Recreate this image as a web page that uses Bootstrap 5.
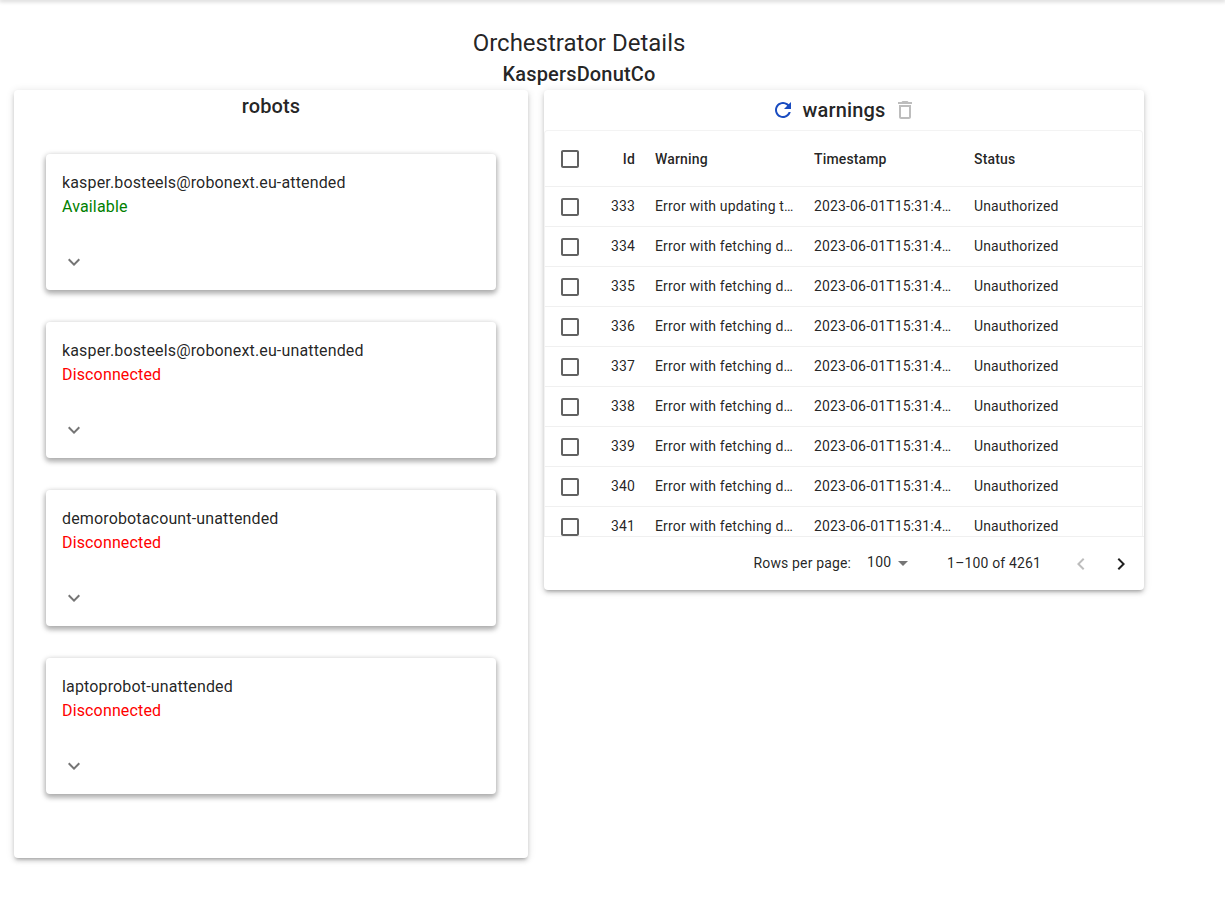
<!DOCTYPE html>
<html lang="en">
  <head>
    <meta charset="UTF-8" />
    <meta name="viewport" content="width=device-width, initial-scale=1.0" />
    <title>Orchestrator Details</title>
    <link
      href="https://cdn.jsdelivr.net/npm/bootstrap@5.3.3/dist/css/bootstrap.min.css"
      rel="stylesheet"
    />
    <style>
      body {
        font-family: Roboto, "Liberation Sans", sans-serif;
        color: rgba(0, 0, 0, 0.87);
        background: #fff;
        margin: 0;
        min-height: 920px;
      }

      .top-edge {
        height: 0;
        box-shadow: 0 0 4px 1px rgba(0, 0, 0, 0.3);
      }

      .page-wrap {
        width: 1130px;
        margin-left: 14px;
      }

      .page-title {
        font-size: 24px;
        font-weight: 400;
        line-height: 32px;
        margin: 0;
        padding-top: 27px;
      }

      .page-subtitle {
        font-size: 20px;
        font-weight: 500;
        letter-spacing: 0.15px;
        line-height: 24px;
        margin: 0;
        padding-top: 3px;
        height: 31px;
      }

      .paper {
        background: #fff;
        border-radius: 4px;
        box-shadow: 0 3px 3px -2px rgba(0, 0, 0, 0.2),
          0 3px 4px 0 rgba(0, 0, 0, 0.14), 0 1px 8px 0 rgba(0, 0, 0, 0.12);
      }

      .robots-panel {
        width: 514px;
        height: 768px;
        flex: none;
      }

      .panel-title {
        font-size: 20px;
        font-weight: 500;
        letter-spacing: 0.15px;
        line-height: 32px;
        margin: 0;
      }

      .robot-list {
        padding: 32px;
        gap: 32px;
      }

      .robot-item {
        height: 136px;
        padding: 17px 16px 16px;
        box-shadow: 0 3px 5px 1px rgba(0, 0, 0, 0.25),
          0 1px 6px 0 rgba(0, 0, 0, 0.14);
      }

      .robot-name,
      .robot-status {
        font-size: 16px;
        letter-spacing: 0.15px;
        line-height: 24px;
      }

      .status-ok {
        color: #008000;
      }

      .status-off {
        color: #f00;
      }

      .expand-icon {
        fill: #757575;
        margin-top: auto;
      }

      .warnings-panel {
        width: 600px;
        height: 500px;
        flex: none;
      }

      .warnings-head {
        height: 40px;
        gap: 8px;
      }

      .refresh-icon {
        fill: #1a4cc0;
      }

      .trash-icon {
        fill: #bdbdbd;
      }

      .grid-box {
        height: 406px;
        margin-right: 1px;
        border: 1px solid #f3f3f3;
        border-bottom: 0;
        border-radius: 4px 4px 0 0;
        overflow: hidden;
      }

      .warn-table {
        table-layout: fixed;
        width: 100%;
        margin: 0;
        font-size: 14px;
        letter-spacing: 0.15px;
      }

      .warn-table th,
      .warn-table td {
        padding: 0 10px;
        height: 40px;
        border-bottom: 1px solid #f0f0f0;
        color: rgba(0, 0, 0, 0.87);
        white-space: nowrap;
        overflow: hidden;
        text-overflow: ellipsis;
        vertical-align: middle;
        box-shadow: none;
      }

      .warn-table thead th {
        height: 55px;
        padding-top: 2px;
        font-weight: 500;
      }

      .warn-table .check-cell {
        width: 49px;
        padding: 0 0 0 13px;
      }

      .warn-table thead .check-cell {
        padding-top: 2px;
      }

      .warn-table .id-cell {
        width: 51px;
        text-align: right;
      }

      .warn-table .warn-cell {
        width: 159px;
      }

      .warn-table .time-cell {
        width: 160px;
      }

      .check-icon {
        display: block;
        fill: #616161;
      }

      tbody .check-icon {
        margin-top: 2px;
      }

      .grid-foot {
        height: 54px;
        border-top: 1px solid #f0f0f0;
        font-size: 14px;
        letter-spacing: 0.15px;
        padding-right: 11px;
      }

      .rows-select {
        margin-left: 16px;
        width: 80px;
        padding-bottom: 2px;
      }

      .page-btns {
        margin-left: 28px;
        gap: 16px;
      }

      .arrow-off {
        fill: #bdbdbd;
      }

      .arrow-on {
        fill: #212121;
      }

      .drop-arrow {
        fill: #757575;
      }
    </style>
  </head>
  <body>
    <div class="top-edge"></div>
    <div class="page-wrap">
      <h1 class="page-title text-center">Orchestrator Details</h1>
      <h2 class="page-subtitle text-center">KaspersDonutCo</h2>
      <div class="d-flex align-items-start gap-3">
        <section class="paper robots-panel">
          <h3 class="panel-title text-center">robots</h3>
          <div class="robot-list d-flex flex-column" id="robotList"></div>
        </section>
        <section class="paper warnings-panel">
          <div class="warnings-head d-flex align-items-center justify-content-center">
            <svg class="refresh-icon" width="24" height="24" viewBox="0 0 24 24">
              <path d="M17.65 6.35C16.2 4.9 14.21 4 12 4c-4.42 0-7.99 3.58-7.99 8s3.57 8 7.99 8c3.73 0 6.84-2.55 7.73-6h-2.08c-.82 2.33-3.04 4-5.65 4-3.31 0-6-2.69-6-6s2.69-6 6-6c1.66 0 3.14.69 4.22 1.78L13 11h7V4l-2.35 2.35z" />
            </svg>
            <h3 class="panel-title">warnings</h3>
            <svg class="trash-icon" width="24" height="24" viewBox="0 0 24 24">
              <path d="M6 19c0 1.1.9 2 2 2h8c1.1 0 2-.9 2-2V7H6v12zM8 9h8v10H8V9zm7.5-5l-1-1h-5l-1 1H5v2h14V4z" />
            </svg>
          </div>
          <div class="grid-box">
            <table class="table warn-table">
              <thead>
                <tr>
                  <th class="check-cell">
                    <svg class="check-icon" width="24" height="24" viewBox="0 0 24 24">
                      <path d="M19 5v14H5V5h14m0-2H5c-1.1 0-2 .9-2 2v14c0 1.1.9 2 2 2h14c1.1 0 2-.9 2-2V5c0-1.1-.9-2-2-2z" />
                    </svg>
                  </th>
                  <th class="id-cell">Id</th>
                  <th class="warn-cell">Warning</th>
                  <th class="time-cell">Timestamp</th>
                  <th>Status</th>
                </tr>
              </thead>
              <tbody id="warnRows"></tbody>
            </table>
          </div>
          <div class="grid-foot d-flex align-items-center justify-content-end">
            <span>Rows per page:</span>
            <span class="rows-select d-flex align-items-center">100<svg class="drop-arrow" width="24" height="24" viewBox="0 0 24 24"><path d="M7 10l5 5 5-5z" /></svg></span>
            <span>1–100 of 4261</span>
            <span class="page-btns d-flex">
              <svg class="arrow-off" width="24" height="24" viewBox="0 0 24 24">
                <path d="M15.41 7.41L14 6l-6 6 6 6 1.41-1.41L10.83 12z" />
              </svg>
              <svg class="arrow-on" width="24" height="24" viewBox="0 0 24 24">
                <path d="M10 6L8.59 7.41 13.17 12l-4.58 4.59L10 18l6-6z" />
              </svg>
            </span>
          </div>
        </section>
      </div>
    </div>

    <script>
      const robots = [
        ["kasper.bosteels@robonext.eu-attended", "Available"],
        ["kasper.bosteels@robonext.eu-unattended", "Disconnected"],
        ["demorobotacount-unattended", "Disconnected"],
        ["laptoprobot-unattended", "Disconnected"],
      ];

      document.getElementById("robotList").innerHTML = robots
        .map(
          ([name, status]) => `
            <div class="paper robot-item d-flex flex-column">
              <div class="robot-name">${name}</div>
              <div class="robot-status ${status === "Available" ? "status-ok" : "status-off"}">${status}</div>
              <svg class="expand-icon" width="24" height="24" viewBox="0 0 24 24">
                <path d="M16.59 8.59L12 13.17 7.41 8.59 6 10l6 6 6-6z" />
              </svg>
            </div>`
        )
        .join("");

      let rows = "";
      for (let id = 333; id <= 341; id++) {
        const warning =
          id === 333
            ? "Error with updating the queue items"
            : "Error with fetching data from the api";
        rows += `
          <tr>
            <td class="check-cell">
              <svg class="check-icon" width="24" height="24" viewBox="0 0 24 24">
                <path d="M19 5v14H5V5h14m0-2H5c-1.1 0-2 .9-2 2v14c0 1.1.9 2 2 2h14c1.1 0 2-.9 2-2V5c0-1.1-.9-2-2-2z" />
              </svg>
            </td>
            <td class="id-cell">${id}</td>
            <td>${warning}</td>
            <td>2023-06-01T15:31:45.000Z</td>
            <td>Unauthorized</td>
          </tr>`;
      }
      document.getElementById("warnRows").innerHTML = rows;
    </script>
    <script src="https://cdn.jsdelivr.net/npm/bootstrap@5.3.3/dist/js/bootstrap.bundle.min.js"></script>
  </body>
</html>
